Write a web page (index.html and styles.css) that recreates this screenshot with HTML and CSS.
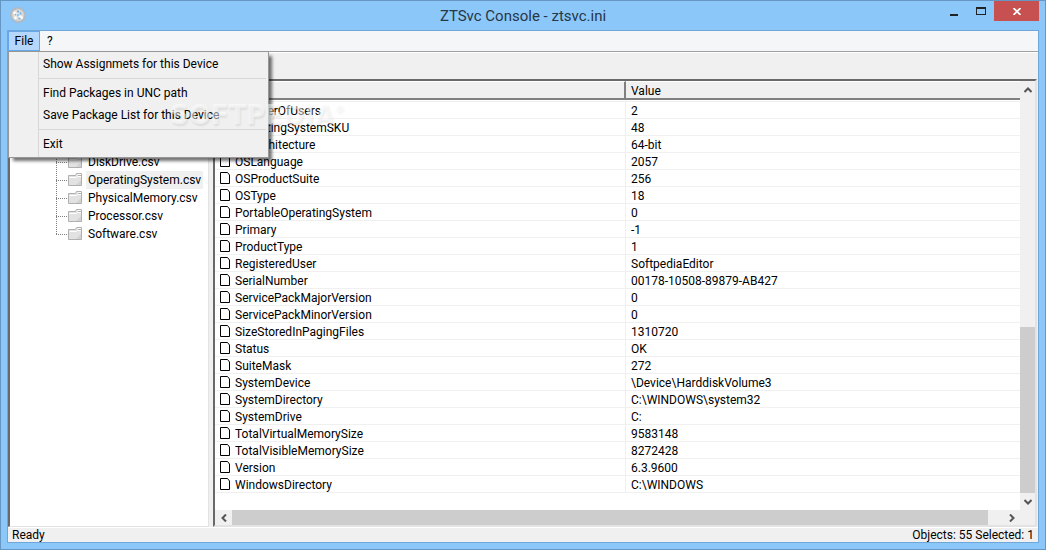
FILE: index.html
```html
<!DOCTYPE html>
<html lang="en">
<head>
<meta charset="utf-8">
<title>ZTSvc Console - ztsvc.ini</title>
<link rel="stylesheet" href="styles.css">
</head>
<body>
<svg class="defs" aria-hidden="true">
  <symbol id="doc" viewBox="0 0 10 12"><path d="M.5.5h7l2 2.500v8.500h-9z" fill="#fff" stroke="#000"/></symbol>
  <symbol id="folder" viewBox="0 0 14 13">
    <path d="M.5 2.500h7l1-2h5v12H.5z" fill="#e2e2e2" stroke="#b0b0b0"/>
    <path d="M1.500 4.500h7l1-1h3.500" stroke="#fff" fill="none"/>
    <path d="M9.500 1.500h3.500" stroke="#fff"/>
    <path d="M10 2.500h3" stroke="#b0b0b0"/>
    <path d="M13 7v5H8z" fill="#d2d2d2"/>
  </symbol>
</svg>
<div class="window">
  <header class="titlebar">
    <svg class="app-icon" viewBox="0 0 16 16" aria-hidden="true">
      <circle cx="8" cy="8" r="7.200" fill="none" stroke="#b9b2aa" stroke-width="1.600" stroke-dasharray="1.800 1.200"/>
      <circle cx="8" cy="8" r="6.300" fill="#dcd9d6" stroke="#c3bdb6"/>
      <path d="M3.500 5l3 2M9.500 9l3 2.500M4.500 11.500l2-1.500" stroke="#fff" stroke-width="2.500"/>
      <path d="M7 4.500h2M10.500 5.500v2M5 7.500h1.500M8.500 11.500h2" stroke="#66b4ee" stroke-width="1.600"/>
      <circle cx="8" cy="8" r="1.500" fill="#7cc0f5" stroke="#e8eaec" stroke-width=".8"/>
    </svg>
    <h1 class="title">ZTSvc Console - ztsvc.ini</h1>
    <div class="controls">
      <button class="control" aria-label="Minimize"><svg width="8" height="12"><path d="M0 9h8v2H0z" fill="#222"/></svg></button>
      <button class="control" aria-label="Maximize"><svg width="10" height="8"><path d="M0 0h10v8H0zM1 2v5h8V2z" fill="#222" fill-rule="evenodd"/></svg></button>
      <button class="control close" aria-label="Close"><svg width="8" height="7"><path d="M.5 0l7 7M7.500 0l-7 7" stroke="#fff" stroke-width="1.700"/></svg></button>
    </div>
  </header>
  <div class="client">
    <nav class="menubar">
      <div class="menu-holder">
        <button class="menu-button open" aria-expanded="true">File</button>
        <div class="menu" role="menu">
          <button class="menu-item" role="menuitem">Show Assignmets for this Device</button>
          <hr class="separator">
          <button class="menu-item" role="menuitem">Find Packages in UNC path</button>
          <button class="menu-item" role="menuitem">Save Package List for this Device</button>
          <hr class="separator">
          <button class="menu-item" role="menuitem">Exit</button>
          <div class="watermark" aria-hidden="true">SOFTPEDIA<sup>®</sup></div>
        </div>
      </div>
      <button class="menu-button">?</button>
    </nav>
    <div class="toolbar"></div>
    <main class="panes">
      <ul class="tree">
        <li><svg class="folder"><use href="#folder"/></svg><a href="#disk">DiskDrive.csv</a></li>
        <li><svg class="folder"><use href="#folder"/></svg><a href="#os" class="selected">OperatingSystem.csv</a></li>
        <li><svg class="folder"><use href="#folder"/></svg><a href="#memory">PhysicalMemory.csv</a></li>
        <li><svg class="folder"><use href="#folder"/></svg><a href="#cpu">Processor.csv</a></li>
        <li><svg class="folder"><use href="#folder"/></svg><a href="#software">Software.csv</a></li>
      </ul>
      <section class="list">
        <div class="list-body">
          <table>
            <thead><tr><th class="name"></th><th>Value</th></tr></thead>
            <tbody>
              <tr><td><svg class="doc"><use href="#doc"/></svg>NumberOfUsers</td><td>2</td></tr>
              <tr><td><svg class="doc"><use href="#doc"/></svg>OperatingSystemSKU</td><td>48</td></tr>
              <tr><td><svg class="doc"><use href="#doc"/></svg>OSArchitecture</td><td>64-bit</td></tr>
              <tr><td><svg class="doc"><use href="#doc"/></svg>OSLanguage</td><td>2057</td></tr>
              <tr><td><svg class="doc"><use href="#doc"/></svg>OSProductSuite</td><td>256</td></tr>
              <tr><td><svg class="doc"><use href="#doc"/></svg>OSType</td><td>18</td></tr>
              <tr><td><svg class="doc"><use href="#doc"/></svg>PortableOperatingSystem</td><td>0</td></tr>
              <tr><td><svg class="doc"><use href="#doc"/></svg>Primary</td><td>-1</td></tr>
              <tr><td><svg class="doc"><use href="#doc"/></svg>ProductType</td><td>1</td></tr>
              <tr><td><svg class="doc"><use href="#doc"/></svg>RegisteredUser</td><td>SoftpediaEditor</td></tr>
              <tr><td><svg class="doc"><use href="#doc"/></svg>SerialNumber</td><td>00178-10508-89879-AB427</td></tr>
              <tr><td><svg class="doc"><use href="#doc"/></svg>ServicePackMajorVersion</td><td>0</td></tr>
              <tr><td><svg class="doc"><use href="#doc"/></svg>ServicePackMinorVersion</td><td>0</td></tr>
              <tr><td><svg class="doc"><use href="#doc"/></svg>SizeStoredInPagingFiles</td><td>1310720</td></tr>
              <tr><td><svg class="doc"><use href="#doc"/></svg>Status</td><td>OK</td></tr>
              <tr><td><svg class="doc"><use href="#doc"/></svg>SuiteMask</td><td>272</td></tr>
              <tr><td><svg class="doc"><use href="#doc"/></svg>SystemDevice</td><td>\Device\HarddiskVolume3</td></tr>
              <tr><td><svg class="doc"><use href="#doc"/></svg>SystemDirectory</td><td>C:\WINDOWS\system32</td></tr>
              <tr><td><svg class="doc"><use href="#doc"/></svg>SystemDrive</td><td>C:</td></tr>
              <tr><td><svg class="doc"><use href="#doc"/></svg>TotalVirtualMemorySize</td><td>9583148</td></tr>
              <tr><td><svg class="doc"><use href="#doc"/></svg>TotalVisibleMemorySize</td><td>8272428</td></tr>
              <tr><td><svg class="doc"><use href="#doc"/></svg>Version</td><td>6.3.9600</td></tr>
              <tr><td><svg class="doc"><use href="#doc"/></svg>WindowsDirectory</td><td>C:\WINDOWS</td></tr>
            </tbody>
          </table>
          <div class="vscroll">
            <button class="arrow" aria-label="Scroll up"><svg width="8" height="6"><path d="M.5 5L4 1.500 7.500 5"/></svg></button>
            <div class="vtrack"><div class="vthumb"></div></div>
            <button class="arrow" aria-label="Scroll down"><svg width="8" height="6"><path d="M.5 1L4 4.500 7.500 1"/></svg></button>
          </div>
        </div>
        <div class="hscroll">
          <button class="arrow" aria-label="Scroll left"><svg width="6" height="8"><path d="M5 .5L1.500 4 5 7.500"/></svg></button>
          <div class="htrack"><div class="hthumb"></div></div>
          <button class="arrow" aria-label="Scroll right"><svg width="6" height="8"><path d="M1 .5L4.500 4 1 7.500"/></svg></button>
        </div>
      </section>
    </main>
    <footer class="statusbar"><span>Ready</span><span>Objects: 55 Selected: 1</span></footer>
  </div>
</div>
</body>
</html>
```
FILE: styles.css
```css
* { box-sizing: border-box; }
body {
  margin: 0;
  font: 12px/16px Roboto, "Open Sans", sans-serif;
  color: #000;
}
button {
  margin: 0;
  padding: 0;
  border: 0;
  background: none;
  font: inherit;
  color: inherit;
}
svg { display: block; flex: none; }
.defs { position: absolute; width: 0; height: 0; }
.window {
  display: flex;
  flex-direction: column;
  min-height: 100vh;
  padding: 0 6px 6px;
  border: 1px solid #6796c3;
  background: #8cc7fa;
}
.titlebar {
  display: grid;
  grid-template-columns: 1fr auto 1fr;
  height: 29px;
}
.app-icon { width: 16px; height: 16px; margin: 6px 3px; }
.title {
  margin: 0;
  font-size: 15px;
  font-weight: 400;
  line-height: 30px;
  color: #263746;
}
.controls { display: flex; justify-content: flex-end; }
.control {
  display: flex;
  align-items: center;
  justify-content: center;
  width: 27px;
  height: 20px;
}
.control.close { width: 45px; background: #c75050; }
.client {
  display: flex;
  flex: 1;
  flex-direction: column;
  border: 1px solid #6fa7d8;
  background: #f0f0f0;
}
.menubar {
  display: flex;
  height: 21px;
  border-bottom: 1px solid #a0a0a0;
  background: #f5f6f7;
}
.menu-holder { position: relative; }
.menu-button { height: 20px; padding: 0 7px; line-height: 20px; }
.menu-button.open {
  width: 32px;
  padding: 0;
  border: 1px solid #66a7e8;
  background: #b5d7fb;
  line-height: 18px;
}
.menu {
  position: absolute;
  z-index: 2;
  top: 20px;
  left: 0;
  width: 261px;
  padding: 1px 2px 2px;
  border: 1px solid #979797;
  background: linear-gradient(90deg, #f0f0f0 29px, #d7d7d7 29px, #d7d7d7 30px, #f0f0f0 30px);
  box-shadow: 4px 4px 3px -1px rgba(0, 0, 0, .55);
}
.menu-item {
  display: block;
  width: 100%;
  height: 22px;
  padding-left: 32px;
  text-align: left;
}
.separator {
  height: 1px;
  margin: 3px 0 3px 28px;
  border: 0;
  background: #d7d7d7;
}
.watermark {
  position: absolute;
  top: 47px;
  left: 161px;
  font: 700 26px/32px "DejaVu Sans", sans-serif;
  color: rgba(255, 255, 255, .5);
  text-shadow: 1px 2px 2px rgba(0, 0, 0, .08);
  white-space: nowrap;
  pointer-events: none;
}
.watermark sup { font-size: 10px; line-height: 0; vertical-align: 12px; }
.toolbar { height: 27px; border-top: 1px solid #fff; }
.panes {
  display: grid;
  grid-template-columns: 201px 1fr;
  flex: 1;
  gap: 4px;
  padding-right: 1px;
}
.tree {
  margin: 0;
  padding: 72px 0 0 46px;
  border: solid;
  border-width: 2px 1px 1px 2px;
  border-color: #696969 #e3e3e3 #e3e3e3 #696969;
  background: #fff;
  list-style: none;
}
.tree li {
  display: flex;
  align-items: center;
  height: 18px;
  background:
    repeating-linear-gradient(180deg, #808080 0 1px, transparent 1px 2px) 0 0 / 1px 100% no-repeat,
    repeating-linear-gradient(90deg, #808080 0 1px, transparent 1px 2px) 0 9px / 11px 1px no-repeat;
}
.tree li:last-child {
  background-size: 1px 10px, 11px 1px;
}
.folder { width: 14px; height: 13px; margin: 0 4px 2px 12px; }
.tree a {
  padding: 0 2px;
  color: #000;
  line-height: 18px;
  text-decoration: none;
}
.tree a.selected { background: #f0f0f0; }
.list {
  display: flex;
  flex-direction: column;
  border: 2px solid;
  border-color: #696969 #e3e3e3 #e3e3e3 #696969;
  background: #fff;
}
.list-body { display: flex; flex: 1; }
table {
  flex: 1;
  align-self: flex-start;
  border-spacing: 0;
  table-layout: fixed;
  width: 100%;
  background: linear-gradient(#f0f0f0, #f0f0f0) 410px 0 / 1px 100% no-repeat;
}
th {
  height: 19px;
  padding: 2px 0 0 5px;
  border-top: 1px solid #fff;
  border-bottom: 2px solid #808080;
  background: #f0f0f0;
  font-weight: 400;
  line-height: 14px;
  text-align: left;
}
th.name { width: 411px; border-right: 2px solid #808080; }
td {
  height: 17px;
  padding: 2px 0 0 5px;
  border-bottom: 1px solid #f0f0f0;
  line-height: 14px;
}
tbody tr:first-child td {
  height: 19px;
  padding-top: 4px;
  background: linear-gradient(#f0f0f0, #f0f0f0) 0 1px / 100% 1px no-repeat;
}
.doc { float: left; width: 10px; height: 12px; margin: 0 5px 0 0; }
.vscroll {
  display: flex;
  flex: none;
  flex-direction: column;
  width: 15px;
  background: #f0f0f0;
}
.hscroll {
  display: flex;
  height: 15px;
  margin-right: 15px;
  background: #f0f0f0;
  box-shadow: 15px 0 #f0f0f0;
}
.arrow {
  display: flex;
  flex: none;
  align-items: center;
  justify-content: center;
  width: 17px;
  height: 17px;
}
.vscroll .arrow { width: 15px; }
.hscroll .arrow { height: 15px; }
.arrow path { fill: none; stroke: #555; stroke-width: 2; }
.vtrack { display: flex; flex: 1; align-items: flex-end; }
.vthumb { width: 15px; height: 42%; background: #cdcdcd; }
.htrack { display: flex; flex: 1; }
.hthumb { width: 98%; background: #cdcdcd; }
.statusbar {
  display: flex;
  justify-content: space-between;
  padding: 0 4px;
  border-top: 1px solid #fff;
  line-height: 14px;
}
```
